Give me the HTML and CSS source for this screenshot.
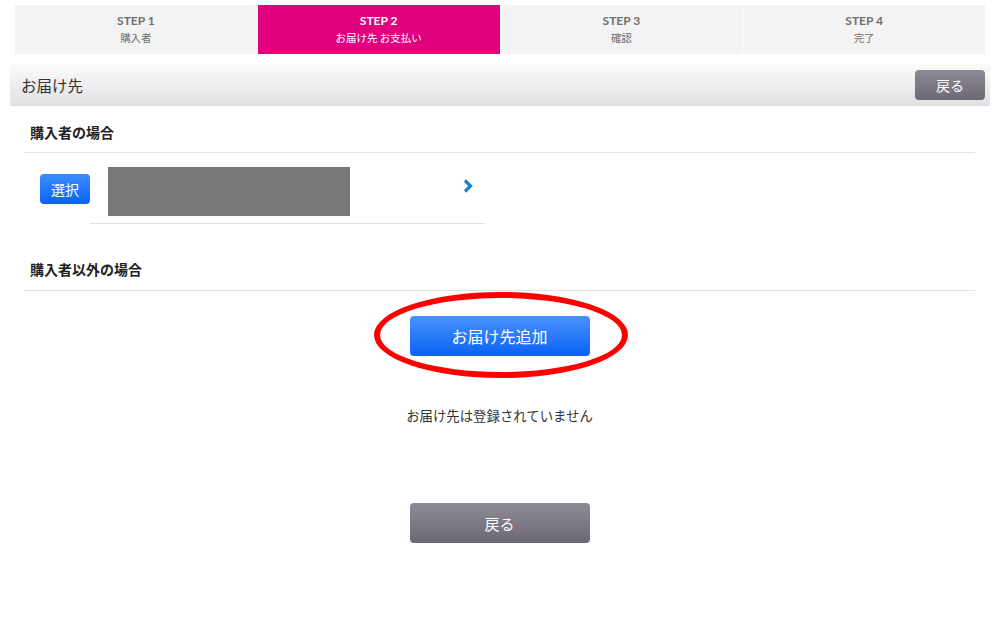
FILE: index.html
```html
<!DOCTYPE html>
<html lang="ja">
<head>
<meta charset="utf-8">
<link rel="stylesheet" href="styles.css">
</head>
<body>
<div class="steps">
  <div class="step"><div class="step-no">STEP 1</div><div class="step-name">購入者</div></div>
  <div class="step active"><div class="step-no">STEP 2</div><div class="step-name">お届け先 お支払い</div></div>
  <div class="step"><div class="step-no">STEP 3</div><div class="step-name">確認</div></div>
  <div class="step"><div class="step-no">STEP 4</div><div class="step-name">完了</div></div>
</div>
<div class="header">
  <h1 class="title">お届け先</h1>
  <button class="btn-back-small">戻る</button>
</div>
<div class="content">
  <h2 class="section-title">購入者の場合</h2>
  <div class="buyer-row">
    <button class="btn-select">選択</button>
    <div class="buyer-item">
      <div class="masked"></div>
      <svg class="chevron" width="10" height="14" viewBox="0 0 10 14"><path d="M2 1.5 L7.5 7 L2 12.5" fill="none" stroke="#1a7fd4" stroke-width="3.2"/></svg>
    </div>
  </div>
  <h2 class="section-title second">購入者以外の場合</h2>
  <div class="add-wrap">
    <button class="btn-add">お届け先追加</button>
    <div class="ring"></div>
  </div>
  <p class="empty">お届け先は登録されていません</p>
  <div class="footer">
    <button class="btn-back">戻る</button>
  </div>
</div>
</body>
</html>
```
FILE: styles.css
```css
* { box-sizing: border-box; }
body {
  margin: 0;
  background: #fff;
  font-family: "Noto Sans CJK JP", "Noto Sans", sans-serif;
  color: #333;
}
.steps {
  display: flex;
  gap: 1px;
  margin: 5px 15px 0 15px;
  height: 49px;
}
.step {
  flex: 1;
  background: #f3f3f3;
  text-align: center;
  color: #6f6f6f;
  padding-top: 9px;
}
.step.active { background: #e2007f; color: #fff; }
.step-no {
  font-family: Lato, "Noto Sans", sans-serif;
  font-weight: bold;
  font-size: 12px;
  line-height: 14px;
}
.step-name {
  font-size: 10.5px;
  line-height: 14px;
  margin-top: 3px;
}
.header {
  margin: 10px 10px 0 10px;
  height: 42px;
  background: linear-gradient(#fbfbfb, #e1e1e4);
  display: flex;
  align-items: center;
  justify-content: space-between;
  padding: 0 5px 0 11px;
}
.title {
  margin: 0;
  font-size: 15.5px;
  font-weight: normal;
  color: #333;
}
button {
  font-family: "Noto Sans CJK JP", "Noto Sans", sans-serif;
  border: none;
  color: #fff;
  cursor: pointer;
}
.btn-back-small {
  width: 70px;
  height: 30px;
  border-radius: 4px;
  background: linear-gradient(#8e8b95, #6c6974);
  font-size: 14px;
}
.content { padding: 0 25px 0 24px; }
.section-title {
  margin: 0;
  font-size: 14px;
  font-weight: bold;
  color: #222;
  padding: 17px 0 10px 6px;
  line-height: 19px;
  border-bottom: 1px solid #e3e3e3;
}
.section-title.second { padding-top: 36px; padding-bottom: 11px; }
.buyer-row {
  display: flex;
  align-items: center;
  height: 71px;
  padding-left: 16px;
}
.btn-select {
  width: 50px;
  height: 30px;
  border-radius: 4px;
  background: linear-gradient(#3a8cff, #0a64f0);
  font-size: 14px;
}
.buyer-item {
  width: 395px;
  height: 64px;
  margin-top: 6px;
  border-bottom: 1px solid #e0e0e0;
  display: flex;
  align-items: center;
  padding-left: 18px;
  padding-right: 12px;
  justify-content: space-between;
}
.masked {
  width: 242px;
  height: 49px;
  background: #777;
}
.chevron { margin-top: -10px; }
.add-wrap {
  position: relative;
  width: 180px;
  margin: 25px auto 0 auto;
}
.btn-add {
  display: block;
  width: 180px;
  height: 40px;
  border-radius: 4px;
  background: linear-gradient(#4a92ff, #0a62f4);
  font-size: 16px;
}
.ring {
  position: absolute;
  left: -36px;
  top: -24px;
  width: 254px;
  height: 86px;
  border: 6px solid #f00;
  border-radius: 50%;
  pointer-events: none;
}
.empty {
  text-align: center;
  margin: 50px 0 0 0;
  font-size: 13.4px;
  line-height: 19px;
  color: #333;
}
.footer { text-align: center; margin-top: 78px; }
.btn-back {
  width: 180px;
  height: 40px;
  border-radius: 4px;
  background: linear-gradient(#8f8c96, #6b6873);
  font-size: 15px;
}
```
